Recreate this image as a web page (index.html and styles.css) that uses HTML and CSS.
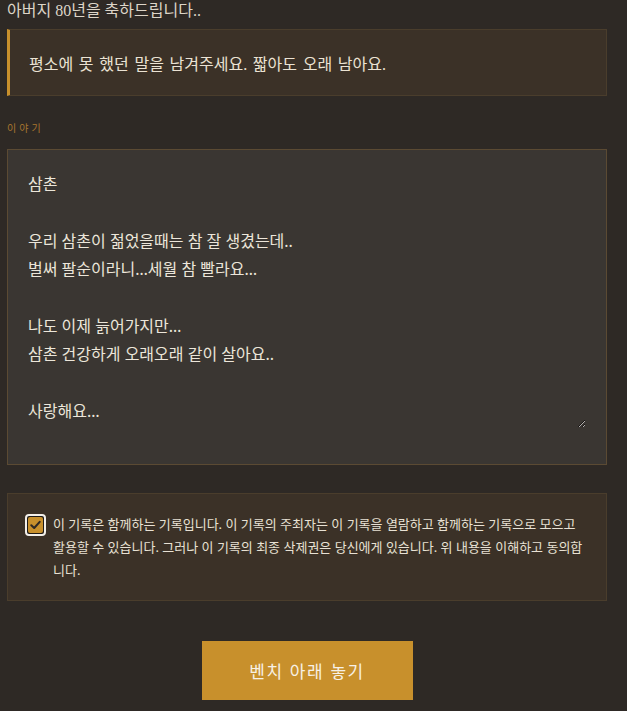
FILE: index.html
```html
<!DOCTYPE html>
<html lang="ko">
<head>
<meta charset="utf-8">
<link rel="stylesheet" href="styles.css">
</head>
<body>
<main class="page">
  <h1 class="title">아버지 80년을 축하드립니다..</h1>
  <div class="prompt">평소에 못 했던 말을 남겨주세요. 짧아도 오래 남아요.</div>
  <label class="label" for="story">이야기</label>
  <div class="story-box">
    <textarea id="story" class="story">삼촌

우리 삼촌이 젊었을때는 참 잘 생겼는데..
벌써 팔순이라니…세월 참 빨라요…

나도 이제 늙어가지만…
삼촌 건강하게 오래오래 같이 살아요..

사랑해요…</textarea>
  </div>
  <div class="consent">
    <span class="check">
      <svg viewBox="0 0 16 16" width="15" height="16"><path d="M3.5 8.3 L6.6 11.2 L12.5 4.6" fill="none" stroke="#2e2925" stroke-width="2.2" stroke-linecap="round" stroke-linejoin="round"/></svg>
    </span>
    <p class="consent-text">이 기록은 함께하는 기록입니다. 이 기록의 주최자는 이 기록을 열람하고 함께하는 기록으로 모으고 활용할 수 있습니다. 그러나 이 기록의 최종 삭제권은 당신에게 있습니다. 위 내용을 이해하고 동의합니다.</p>
  </div>
  <div class="actions">
    <button class="submit">벤치 아래 놓기</button>
  </div>
</main>
</body>
</html>
```
FILE: styles.css
```css
html, body {
  margin: 0;
  padding: 0;
  background: #2e2925;
}
.page {
  width: 600px;
  padding: 0 0 0 7px;
  font-family: "Liberation Serif", "Noto Sans CJK KR", serif;
  color: #e4dccf;
}
.title {
  margin: 0;
  font-size: 16px;
  font-weight: normal;
  line-height: 22px;
  height: 22px;
  color: #ddd5c8;
}
.prompt {
  margin-top: 7px;
  box-sizing: border-box;
  height: 67px;
  display: flex;
  align-items: center;
  padding: 0 0 0 19px;
  background: #3b3127;
  border: 1px solid #4a3d2c;
  border-left: 3px solid #c8902c;
  font-size: 16px;
  word-spacing: 1.7px;
  color: #ebe3d4;
}
.label {
  display: block;
  margin-top: 26px;
  font-family: "Noto Sans CJK KR", sans-serif;
  font-size: 10px;
  letter-spacing: 3px;
  line-height: 12px;
  color: #a8762f;
}
.story-box {
  margin-top: 15px;
  box-sizing: border-box;
  width: 600px;
  height: 316px;
  padding: 20px 20px 0 20px;
  background: #3a3632;
  border: 1px solid #5b4a33;
}
.story {
  display: block;
  box-sizing: border-box;
  width: 558px;
  height: 258px;
  margin: 0;
  padding: 0;
  background: transparent;
  border: 0;
  outline: none;
  font-family: "Noto Sans", "Noto Sans CJK KR", sans-serif;
  font-size: 16px;
  line-height: 28.4px;
  color: #ece6da;
  resize: vertical;
  overflow: hidden;
}
.consent {
  margin-top: 28px;
  box-sizing: border-box;
  height: 108px;
  display: flex;
  align-items: flex-start;
  gap: 7px;
  padding: 20px 17px 0 17px;
  background: #3b3127;
  border: 1px solid #4a3d2c;
}
.check {
  flex: none;
  box-sizing: border-box;
  width: 21px;
  height: 22px;
  border: 2px solid #f4f0ea;
  border-radius: 4px;
  background: #1d1a17;
  display: flex;
  align-items: center;
  justify-content: center;
}
.check svg {
  display: block;
  background: #c8902c;
  border-radius: 2px;
}
.consent-text {
  margin: -1px 0 0;
  font-family: "Noto Sans", "Noto Sans CJK KR", sans-serif;
  font-size: 13px;
  line-height: 23px;
  color: #e8e1d4;
}
.actions {
  display: flex;
  justify-content: center;
  margin-top: 40px;
}
.submit {
  width: 211px;
  height: 59px;
  border: 0;
  background: #c8902c;
  color: #f7f1e6;
  font-family: "Noto Sans CJK KR", sans-serif;
  font-size: 17px;
  letter-spacing: 1.5px;
  cursor: pointer;
}
```
